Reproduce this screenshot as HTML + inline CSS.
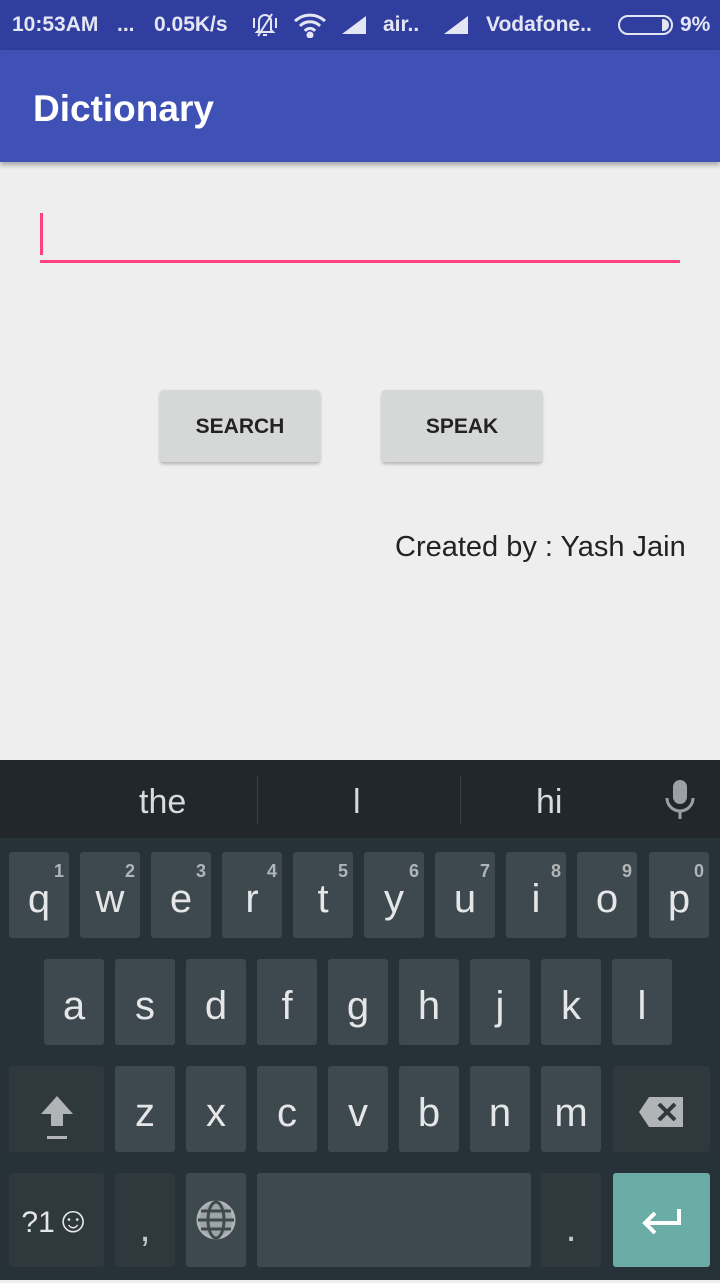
<!DOCTYPE html>
<html><head><meta charset="utf-8"><style>
*{margin:0;padding:0;box-sizing:border-box}
body{width:720px;height:1280px;overflow:hidden;background:#eeeeee;font-family:"Liberation Sans",sans-serif;position:relative}
.abs{position:absolute}
.sb{left:0;top:0;width:720px;height:50px;background:#303f9f;color:#e4e6f4;font-weight:bold;font-size:21px}
.sb span{position:absolute;top:13px}
.ab{left:0;top:50px;width:720px;height:112px;background:#3f51b5;box-shadow:0 3px 5px rgba(0,0,0,.3)}
.ab div{position:absolute;left:33px;top:38px;color:#fff;font-size:37px;font-weight:bold}
.btn{width:160px;height:72px;background:#d6d7d7;border-radius:3px;box-shadow:0 2px 3px rgba(0,0,0,.25);font-size:21px;color:#222;text-align:center;line-height:74px;font-weight:bold}
.kb{left:0;top:760px;width:720px;height:520px;background:#263238}
.sug{left:0;top:760px;width:720px;height:78px;background:#21272b;color:#d8dadb;font-size:34px}
.k{position:absolute;width:60px;height:86px;background:#3e494f;border-radius:3px;color:#e4e6e7;font-size:40px;text-align:center;line-height:94px}
.k sup{position:absolute;right:5px;top:-28px;font-size:18px;color:#b0b5b8;font-weight:bold}
.f{background:#2e383d}
</style></head><body>
<div class="abs sb">
<span style="left:12px">10:53AM</span><span style="left:117px">...</span><span style="left:154px">0.05K/s</span>
<svg class="abs" style="left:250px;top:12px" width="30" height="26" viewBox="0 0 30 26" fill="none" stroke="#e4e6f4" stroke-width="2"><path d="M9 18V9a6 6 0 0 1 12 0v9l2 2H7z M13 23h4 M4 6v10 M26 6v10 M8 24L22 2"/></svg>
<svg class="abs" style="left:293px;top:12px" width="34" height="26" viewBox="0 0 34 26" fill="none" stroke="#e4e6f4" stroke-width="3"><path d="M2 9a22 22 0 0 1 30 0M7 14a14 14 0 0 1 20 0M12 19a6 6 0 0 1 10 0"/><circle cx="17" cy="23" r="2" fill="#e4e6f4"/></svg>
<svg class="abs" style="left:340px;top:14px" width="30" height="22"><path d="M2 20h24V2z" fill="#e4e6f4"/></svg>
<span style="left:383px">air..</span>
<svg class="abs" style="left:442px;top:14px" width="30" height="22"><path d="M2 20h24V2z" fill="#e4e6f4"/></svg>
<span style="left:486px">Vodafone..</span>
<div class="abs" style="left:618px;top:15px;width:55px;height:20px;border:2px solid #e4e6f4;border-radius:10px"></div>
<div class="abs" style="left:662px;top:19px;width:7px;height:12px;background:#e4e6f4;border-radius:0 6px 6px 0"></div>
<span style="left:680px">9%</span>
</div>
<div class="abs ab"><div>Dictionary</div></div>
<div class="abs" style="left:40px;top:213px;width:3px;height:42px;background:#ff4081"></div>
<div class="abs" style="left:40px;top:260px;width:640px;height:3px;background:#ff4081"></div>
<div class="abs btn" style="left:160px;top:390px">SEARCH</div>
<div class="abs btn" style="left:382px;top:390px">SPEAK</div>
<div class="abs" style="left:395px;top:531px;font-size:29px;color:#222">Created by : Yash Jain</div>
<div class="abs kb"></div>
<div class="abs sug">
<span class="abs" style="left:139px;top:23px">the</span>
<div class="abs" style="left:257px;top:16px;width:1px;height:48px;background:#3a4247"></div>
<span class="abs" style="left:353px;top:23px">l</span>
<div class="abs" style="left:460px;top:16px;width:1px;height:48px;background:#3a4247"></div>
<span class="abs" style="left:536px;top:23px">hi</span>
<svg class="abs" style="left:664px;top:18px" width="32" height="42" viewBox="0 0 32 42"><rect x="9" y="2" width="14" height="24" rx="7" fill="#9aa0a3"/><path d="M3 20a13 13 0 0 0 26 0M16 33v8" stroke="#9aa0a3" stroke-width="3" fill="none"/></svg>
</div>
<!-- row1 -->
<div class="k" style="left:9px;top:852px">q<sup>1</sup></div>
<div class="k" style="left:80px;top:852px">w<sup>2</sup></div>
<div class="k" style="left:151px;top:852px">e<sup>3</sup></div>
<div class="k" style="left:222px;top:852px">r<sup>4</sup></div>
<div class="k" style="left:293px;top:852px">t<sup>5</sup></div>
<div class="k" style="left:364px;top:852px">y<sup>6</sup></div>
<div class="k" style="left:435px;top:852px">u<sup>7</sup></div>
<div class="k" style="left:506px;top:852px">i<sup>8</sup></div>
<div class="k" style="left:577px;top:852px">o<sup>9</sup></div>
<div class="k" style="left:649px;top:852px">p<sup>0</sup></div>
<!-- row2 -->
<div class="k" style="left:44px;top:959px">a</div>
<div class="k" style="left:115px;top:959px">s</div>
<div class="k" style="left:186px;top:959px">d</div>
<div class="k" style="left:257px;top:959px">f</div>
<div class="k" style="left:328px;top:959px">g</div>
<div class="k" style="left:399px;top:959px">h</div>
<div class="k" style="left:470px;top:959px">j</div>
<div class="k" style="left:541px;top:959px">k</div>
<div class="k" style="left:612px;top:959px">l</div>
<!-- row3 -->
<div class="k f" style="left:9px;top:1066px;width:95px"><svg class="abs" style="left:24px;top:26px" width="48" height="52"><path d="M24 4L8 22h10v12h12V22h10z" fill="#b0b4b6"/><rect x="14" y="44" width="20" height="3" fill="#b0b4b6"/></svg></div>
<div class="k" style="left:115px;top:1066px">z</div>
<div class="k" style="left:186px;top:1066px">x</div>
<div class="k" style="left:257px;top:1066px">c</div>
<div class="k" style="left:328px;top:1066px">v</div>
<div class="k" style="left:399px;top:1066px">b</div>
<div class="k" style="left:470px;top:1066px">n</div>
<div class="k" style="left:541px;top:1066px">m</div>
<div class="k f" style="left:613px;top:1066px;width:97px"><svg class="abs" style="left:24px;top:26px" width="50" height="40"><path d="M12 5h34v30H12L2 20z" fill="#b0b4b6"/><path d="M22 12l16 16M38 12L22 28" stroke="#2e383d" stroke-width="4"/></svg></div>
<!-- row4 -->
<div class="k f" style="left:9px;top:1173px;width:95px;height:94px;line-height:94px;font-size:30px">?1<span style="font-size:36px">☺</span></div>
<div class="k f" style="left:115px;top:1173px;height:94px;line-height:110px;color:#c0c4c6">,</div>
<div class="k" style="left:186px;top:1173px;height:94px"><svg class="abs" style="left:9px;top:26px" width="42" height="42" viewBox="0 0 42 42" fill="none" stroke="#b0b4b6" stroke-width="3"><circle cx="21" cy="21" r="18" fill="#9ea3a6"/><ellipse cx="21" cy="21" rx="8" ry="18" stroke="#3e494f"/><path d="M3 21h36M6 12h30M6 30h30" stroke="#3e494f"/></svg></div>
<div class="k" style="left:257px;top:1173px;width:274px;height:94px"></div>
<div class="k f" style="left:541px;top:1173px;height:94px;line-height:110px;color:#c0c4c6">.</div>
<div class="k" style="left:613px;top:1173px;width:97px;height:94px;background:#6aaca6"><svg class="abs" style="left:28px;top:34px" width="42" height="30"><path d="M38 2v14H6M14 6L4 16l10 10" stroke="#fff" stroke-width="4" fill="none"/></svg></div>
</body></html>
